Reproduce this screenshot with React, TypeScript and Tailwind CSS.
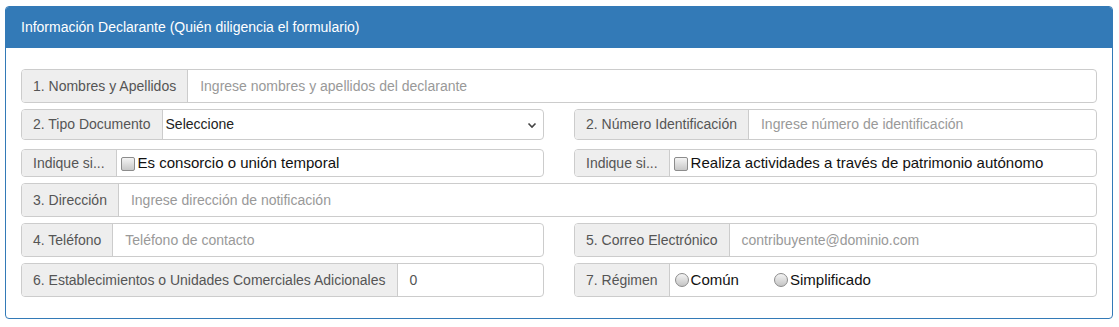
import React from "react";

const font = { fontFamily: '"Liberation Sans", Arial, sans-serif' };

function Addon({ children, w }: { children: React.ReactNode; w?: string }) {
  return (
    <div className={`flex items-center shrink-0 bg-[#eeeeee] border-r border-[#cccccc] px-[11px] text-[14px] text-[#555555] whitespace-nowrap ${w ?? ""}`}>
      {children}
    </div>
  );
}

function Group({ children, h }: { children: React.ReactNode; h: string }) {
  return (
    <div className={`flex ${h} border border-[#cccccc] rounded-[4px] overflow-hidden bg-white`}>
      {children}
    </div>
  );
}

function Placeholder({ text }: { text: string }) {
  return (
    <div className="flex items-center px-[12px] text-[14px] text-[#999999] whitespace-nowrap">{text}</div>
  );
}

function Checkbox() {
  return (
    <span className="inline-block w-[14px] h-[14px] rounded-[2px] border border-[#8c8c8c] bg-gradient-to-b from-[#f4f4f4] to-[#c8c8c8] mr-[3px] ml-[4px] shrink-0" />
  );
}

function Radio() {
  return (
    <span className="inline-block w-[14px] h-[14px] rounded-full border border-[#8c8c8c] bg-gradient-to-b from-[#f4f4f4] to-[#c4c4c4] mr-[2px] shrink-0" />
  );
}

export default function App() {
  return (
    <div className="bg-white w-[1119px] h-[327px] pl-[5px] pr-[6px] pt-[6px]" style={font}>
      <div className="border border-[#337ab7] rounded-[4px] overflow-hidden bg-white">
        <div className="h-[41px] bg-[#337ab7] text-white text-[14px] flex items-center px-[15px]">
          Información Declarante (Quién diligencia el formulario)
        </div>
        <div className="px-[15px] pt-[21px] pb-[21px] flex flex-col">
          <Group h="h-[34px]">
            <Addon>1. Nombres y Apellidos</Addon>
            <Placeholder text="Ingrese nombres y apellidos del declarante" />
          </Group>

          <div className="grid grid-cols-2 gap-x-[30px] mt-[6px]">
            <Group h="h-[31px]">
              <Addon>2. Tipo Documento</Addon>
              <div className="flex-1 flex items-center justify-between pl-[3px] pr-[6px] text-[14px] text-[#222222]">
                <span>Seleccione</span>
                <svg width="10" height="10" viewBox="0 0 10 10">
                  <path d="M1.5 3.5 L5 7 L8.5 3.5" fill="none" stroke="#444" strokeWidth="1.6" />
                </svg>
              </div>
            </Group>
            <Group h="h-[31px]">
              <Addon>2. Número Identificación</Addon>
              <Placeholder text="Ingrese número de identificación" />
            </Group>
          </div>

          <div className="grid grid-cols-2 gap-x-[30px] mt-[9px]">
            <Group h="h-[28px]">
              <Addon>Indique si...</Addon>
              <div className="flex items-center text-[15px] text-[#111111] whitespace-nowrap pt-[1px]">
                <Checkbox />
                <span>Es consorcio o unión temporal</span>
              </div>
            </Group>
            <Group h="h-[28px]">
              <Addon>Indique si...</Addon>
              <div className="flex items-center text-[15px] text-[#111111] whitespace-nowrap pt-[1px]">
                <Checkbox />
                <span>Realiza actividades a través de patrimonio autónomo</span>
              </div>
            </Group>
          </div>

          <div className="mt-[6px]">
            <Group h="h-[34px]">
              <Addon>3. Dirección</Addon>
              <Placeholder text="Ingrese dirección de notificación" />
            </Group>
          </div>

          <div className="grid grid-cols-2 gap-x-[30px] mt-[6px]">
            <Group h="h-[34px]">
              <Addon>4. Teléfono</Addon>
              <Placeholder text="Teléfono de contacto" />
            </Group>
            <Group h="h-[34px]">
              <Addon>5. Correo Electrónico</Addon>
              <Placeholder text="contribuyente@dominio.com" />
            </Group>
          </div>

          <div className="grid grid-cols-2 gap-x-[30px] mt-[6px]">
            <Group h="h-[34px]">
              <Addon>6. Establecimientos o Unidades Comerciales Adicionales</Addon>
              <div className="flex items-center px-[12px] text-[14px] text-[#555555]">0</div>
            </Group>
            <Group h="h-[34px]">
              <Addon>7. Régimen</Addon>
              <div className="flex items-center text-[15px] text-[#111111] whitespace-nowrap pl-[5px]">
                <Radio />
                <span>Común</span>
                <span className="ml-[35px]" />
                <Radio />
                <span>Simplificado</span>
              </div>
            </Group>
          </div>
        </div>
      </div>
    </div>
  );
}
